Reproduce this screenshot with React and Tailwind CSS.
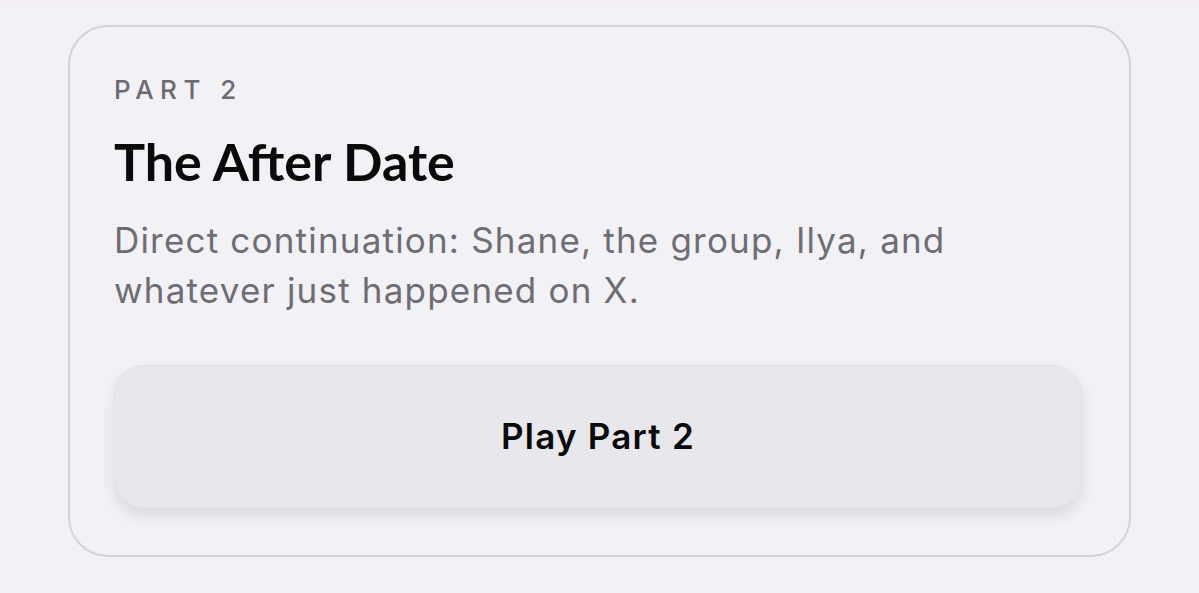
import React from 'react';

const App = () => {
  return (
    <div className="min-h-[593px] w-[1199px] bg-[#f2f1f6] overflow-hidden">
      <div className="h-[14px] bg-gradient-to-b from-[#f4eff3] to-[#f2f1f6]" />
      <div className="px-[68px] pt-[11px]">
        <div className="rounded-[40px] border-2 border-[#d3d2d8] bg-[#f2f1f6] pl-[44px] pr-[47px] pt-[48px] pb-[47px] flex flex-col">
          <div
            className="text-[26px] leading-[30px] tracking-[0.25em] font-medium text-[#6c6b72]"
            style={{ fontFamily: 'Inter, sans-serif' }}
          >
            PART 2
          </div>
          <h1
            className="mt-[28px] text-[52px] leading-[56px] font-bold text-[#0a0a0a]"
            style={{ fontFamily: 'Lato, sans-serif' }}
          >
            The After Date
          </h1>
          <p
            className="mt-[26px] text-[35px] leading-[50px] tracking-[0.034em] text-[#6e6d74] max-w-[900px]"
            style={{ fontFamily: 'Inter, sans-serif' }}
          >
            Direct continuation: Shane, the group, Ilya, and whatever just happened on X.
          </p>
          <button
            className="mt-[50px] h-[143px] w-full rounded-[30px] bg-[#e8e7eb] border border-[#e3e2e7] shadow-[0_8px_14px_rgba(60,55,80,0.12)] text-[35px] tracking-[0.035em] font-semibold text-[#0a0a0a]"
            style={{ fontFamily: 'Inter, sans-serif' }}
          >
            Play Part 2
          </button>
        </div>
      </div>
    </div>
  );
};

export default App;
